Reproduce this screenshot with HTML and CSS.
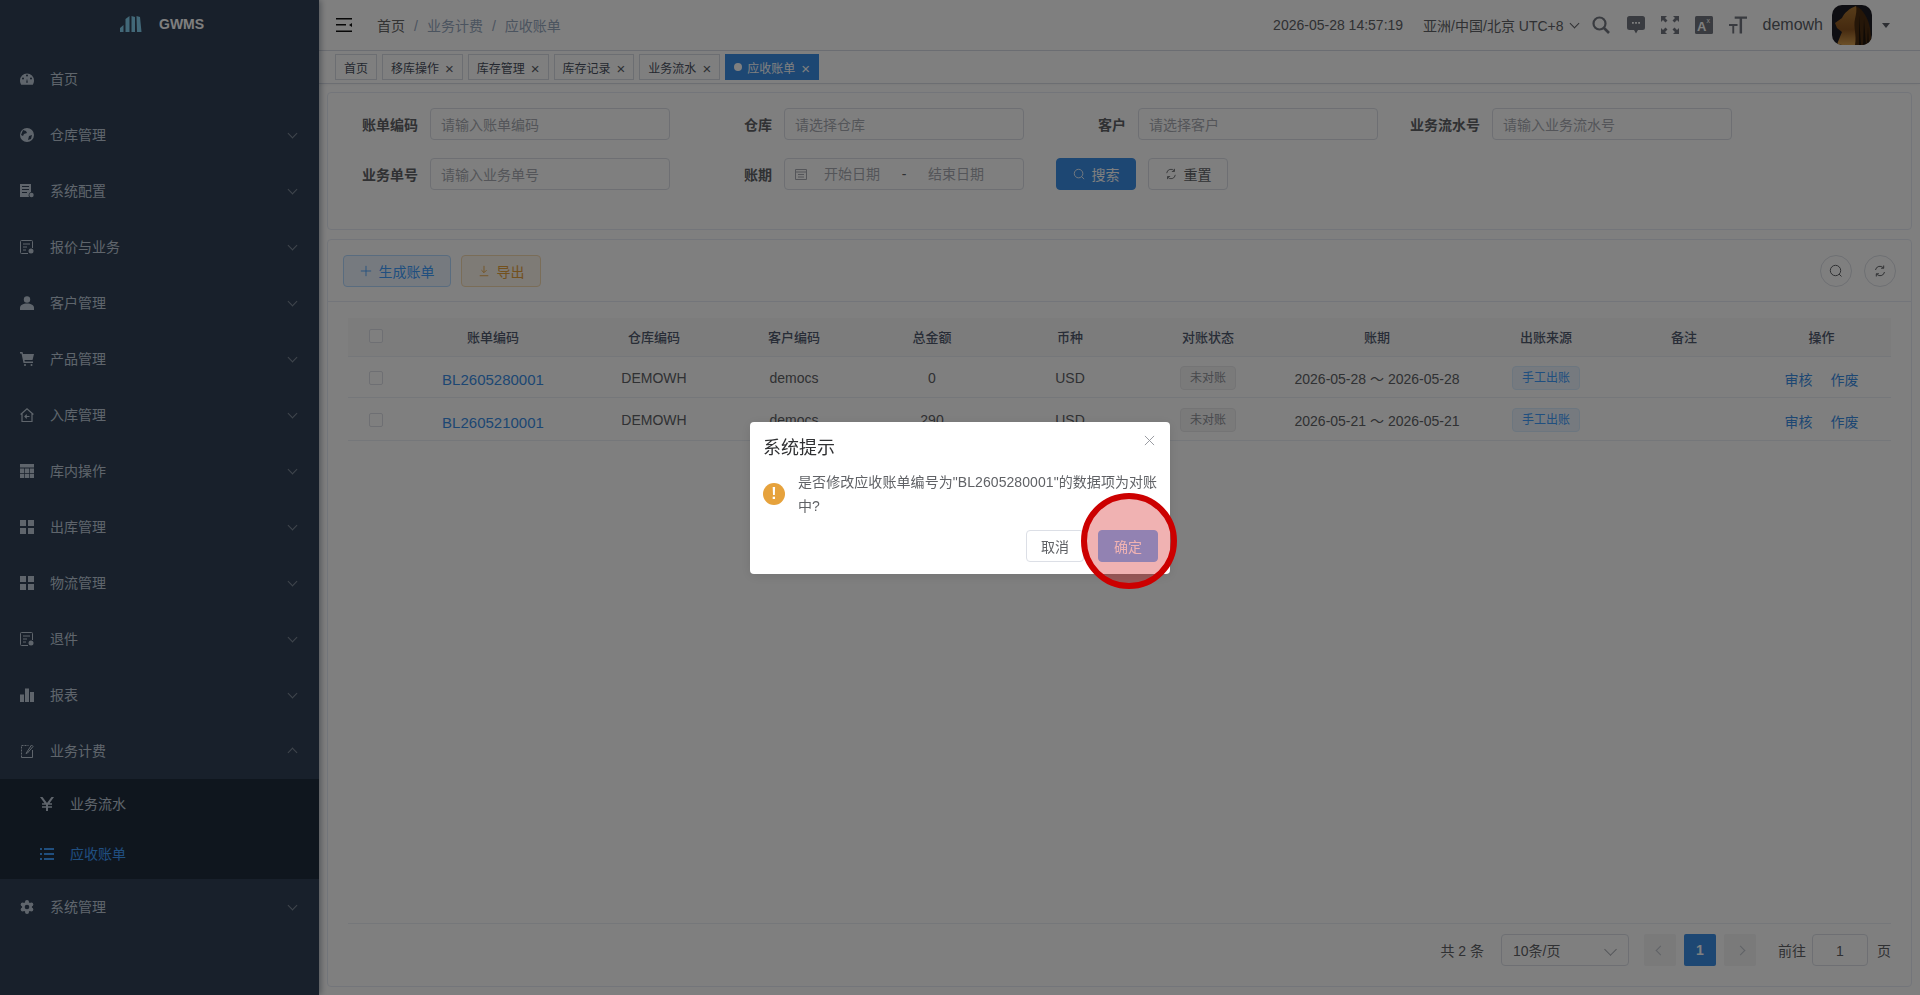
FILE: index.html
```html
<!DOCTYPE html>
<html lang="zh-CN">
<head>
    <meta charset="UTF-8">
    <title>GWMS</title>
    <link rel="stylesheet" href="styles.css">
</head>
<body>
    <div class="app">
        <aside class="sidebar">
            <div class="logo">
                <svg class="logo-icon" viewBox="0 0 22 16"><path fill="#84d0f0" d="M0 16V12l3.500-3V16zM5.500 16V3l4-3V16zM11.500 16V0L15 1V16zM17 16 16.500 0 20 1l1.500 15z"/></svg>
                <span class="logo-text">GWMS</span>
            </div>
            <a class="menu-item"><svg class="menu-icon" viewBox="0 0 14 14"><path d="M7 1.500a7 7 0 0 0-7 7c0 1.700.5 3.200 1.200 4.200h11.600c.7-1 1.200-2.500 1.200-4.200a7 7 0 0 0-7-7zM3 5.500a1 1 0 1 1 0 2 1 1 0 0 1 0-2zM6 3.500a1 1 0 1 1 2 0 1 1 0 0 1-2 0zM7.800 10.500a1.200 1.200 0 0 1-1.600 0L7 6.500zM11 7.500a1 1 0 1 1 0-2 1 1 0 0 1 0 2z" fill-rule="evenodd"/></svg><span>首页</span></a>
            <a class="menu-item"><svg class="menu-icon" viewBox="0 0 14 14"><path d="M7 0a7 7 0 1 0 0 14A7 7 0 0 0 7 0zM3 2l3 1 1 2-3 1-1 2-2-1zM9 8l3-1-1 4-3 1z" fill-rule="evenodd"/></svg><span>仓库管理</span><i class="chevron"></i></a>
            <a class="menu-item"><svg class="menu-icon" viewBox="0 0 14 14"><path d="M0 0h11v8a3.500 3.500 0 0 0-2 5H0zM2 2v1h7V2zM2 5v1h7V5zM2 8v1h5V8z" fill-rule="evenodd"/><circle cx="11.500" cy="11" r="2.200"/></svg><span>系统配置</span><i class="chevron"></i></a>
            <a class="menu-item"><svg class="menu-icon line" viewBox="0 0 14 14"><path stroke="#bfcbd9" d="M8 13.500H1.500a1 1 0 0 1-1-1V1.500a1 1 0 0 1 1-1h10a1 1 0 0 1 1 1V8M3 4h7M3 7h4M3 10h3"/><circle cx="11" cy="11" r="2.500" fill="#bfcbd9"/></svg><span>报价与业务</span><i class="chevron"></i></a>
            <a class="menu-item"><svg class="menu-icon" viewBox="0 0 14 14"><circle cx="7" cy="3.500" r="3.200"/><path d="M0 14v-2c0-3 3-4.500 7-4.500s7 1.500 7 4.500v2z"/></svg><span>客户管理</span><i class="chevron"></i></a>
            <a class="menu-item"><svg class="menu-icon" viewBox="0 0 14 14"><path d="M0 0h2.500l.5 2h11l-1.500 6H4.500l.3 1.500H13V11H3.500L1.500 1.500H0z"/><circle cx="5" cy="13" r="1"/><circle cx="11.500" cy="13" r="1"/></svg><span>产品管理</span><i class="chevron"></i></a>
            <a class="menu-item"><svg class="menu-icon line" viewBox="0 0 14 14"><path stroke="#bfcbd9" stroke-width="1.200" d="M.6 6.500 7 .8l6.400 5.700M2 5.500v8h10v-8"/><path stroke="#bfcbd9" stroke-width="1.200" d="M9.500 8.500H5M6.800 6.700 5 8.500l1.800 1.800"/></svg><span>入库管理</span><i class="chevron"></i></a>
            <a class="menu-item"><svg class="menu-icon" viewBox="0 0 14 14"><path d="M0 0h14v3.500H0zM0 4.500h4.300V9H0zM5 4.500h4V9H5zM9.700 4.500H14V9H9.700zM0 9.700h4.300V14H0zM5 9.700h4V14H5zM9.700 9.700H14V14H9.700z"/></svg><span>库内操作</span><i class="chevron"></i></a>
            <a class="menu-item"><svg class="menu-icon" viewBox="0 0 14 14"><path d="M0 0h6v6H0zM8 0h6v6H8zM0 8h6v6H0zM8 8h6v6H8z"/></svg><span>出库管理</span><i class="chevron"></i></a>
            <a class="menu-item"><svg class="menu-icon" viewBox="0 0 14 14"><path d="M0 0h6v6H0zM8 0h6v6H8zM0 8h6v6H0zM8 8h6v6H8z"/></svg><span>物流管理</span><i class="chevron"></i></a>
            <a class="menu-item"><svg class="menu-icon line" viewBox="0 0 14 14"><path stroke="#bfcbd9" d="M8 13.500H1.500a1 1 0 0 1-1-1V1.500a1 1 0 0 1 1-1h10a1 1 0 0 1 1 1V8M3 4h7M3 7h4M3 10h3"/><circle cx="11" cy="11" r="2.500" fill="#bfcbd9"/></svg><span>退件</span><i class="chevron"></i></a>
            <a class="menu-item"><svg class="menu-icon" viewBox="0 0 14 14"><path d="M0 6.500h4V14H0zM5 .5h4V14H5zM10 4h4v10h-4z"/></svg><span>报表</span><i class="chevron"></i></a>
            <a class="menu-item"><svg class="menu-icon line" viewBox="0 0 14 14"><path stroke="#bfcbd9" stroke-dasharray="2 1" d="M1.500 13.500v-12h7"/><path stroke="#bfcbd9" d="M1.500 13.500h11V6M6 9.500 11.500 1 13 2.500 7.500 9z"/></svg><span>业务计费</span><i class="chevron up"></i></a>
            <div class="submenu">
                <a class="menu-item sub"><svg class="menu-icon" viewBox="0 0 14 14"><path d="M0 0h2.500L7 6l4.500-6H14L9.500 6.300H12v1.500H8v1.400h4v1.500H8V14H6v-3.300H2V9.200h4V7.800H2V6.300h2.500z"/></svg><span>业务流水</span></a>
                <a class="menu-item sub active"><svg class="menu-icon" viewBox="0 0 14 14"><path d="M0 1h2v2H0zM4 1h10v2H4zM0 6h2v2H0zM4 6h10v2H4zM0 11h2v2H0zM4 11h10v2H4z"/></svg><span>应收账单</span></a>
            </div>
            <a class="menu-item"><svg class="menu-icon" viewBox="0 0 14 14"><circle cx="7" cy="7" r="5"/><circle cx="7" cy="2" r="2"/><circle cx="7" cy="12" r="2"/><circle cx="2.700" cy="4.500" r="2"/><circle cx="11.300" cy="4.500" r="2"/><circle cx="2.700" cy="9.500" r="2"/><circle cx="11.300" cy="9.500" r="2"/><circle cx="7" cy="7" r="2.300" fill="#304156"/></svg><span>系统管理</span><i class="chevron"></i></a>
        </aside>

        <main class="main">
            <header class="navbar">
                <svg class="hamburger" viewBox="0 0 16 14"><path fill="#111" d="M0 0h16v1.600H0zM0 6h10v1.600H0zM0 12.400h16V14H0zM16 5v4l-3-2z"/></svg>
                <nav class="breadcrumb">
                    <span class="crumb-first">首页</span><i>/</i><span>业务计费</span><i>/</i><span>应收账单</span>
                </nav>
                <div class="navbar-right">
                    <span class="clock">2026-05-28 14:57:19</span>
                    <span class="timezone">亚洲/中国/北京 UTC+8<i class="chevron dark"></i></span>
                    <svg class="tool tool-search" viewBox="0 0 18 18" fill="none"><circle cx="7.500" cy="7.500" r="6" stroke="#737780" stroke-width="2.200"/><path stroke="#737780" stroke-width="2.600" d="m12 12 5 5"/></svg>
                    <svg class="tool" viewBox="0 0 18 18"><path fill="#737780" d="M2.500 0h13A2.500 2.500 0 0 1 18 2.500v9a2.500 2.500 0 0 1-2.500 2.500H11l-2 3.500L7 14H2.500A2.500 2.500 0 0 1 0 11.500v-9A2.500 2.500 0 0 1 2.500 0z"/><path fill="#fff" d="M5 6h1.800v1.800H5zM8.100 6h1.800v1.800H8.100zM11.200 6H13v1.800h-1.800z"/></svg>
                    <svg class="tool" viewBox="0 0 18 18"><path fill="#737780" d="M0 0h6L4 2l2.500 2.500-2 2L2 4 0 6zM18 0v6l-2-2-2.500 2.500-2-2L14 2l-2-2zM0 18v-6l2 2 2.500-2.500 2 2L4 16l2 2zM18 18h-6l2-2-2.500-2.500 2-2L16 14l2-2z"/></svg>
                    <svg class="tool" viewBox="0 0 18 18"><rect width="18" height="18" rx="1.500" fill="#737780"/><text x="2" y="15" class="tool-a">A</text><text x="11.500" y="7" class="tool-x">x</text></svg>
                    <svg class="tool" viewBox="0 0 19 18"><path fill="#737780" d="M6 0h13v2.500h-5.200V18h-2.600V2.500H6zM0 8h9v2H5.500v8h-2v-8H0z"/></svg>
                    <span class="username">demowh</span>
                    <svg class="avatar" viewBox="0 0 40 40">
                        <defs>
                            <clipPath id="avatarClip"><rect width="40" height="40" rx="10"/></clipPath>
                            <linearGradient id="fur" x1="0" y1="0" x2="0" y2="1">
                                <stop offset="0" stop-color="#b07a34"/>
                                <stop offset="0.6" stop-color="#8c5520"/>
                                <stop offset="1" stop-color="#d8a050"/>
                            </linearGradient>
                        </defs>
                        <g clip-path="url(#avatarClip)">
                            <rect width="40" height="40" fill="#1c1c24"/>
                            <path d="M24 1c7 3 12 12 14 22l2 17H8z" fill="#4a2c10"/>
                            <path d="M32 14l2 26h-3zM27 10l2 30h-2zM36 22l1 18h-2z" fill="#1f150c"/>
                            <path d="M24 1c-6 2-12 7-14 12l-7 5 2 5 5 4c-2 5-4 9-5 13h18c2-10-2-18 0-26 1-5 2-9 1-13z" fill="url(#fur)"/>
                        </g>
                    </svg>
                    <i class="caret"></i>
                </div>
            </header>

            <div class="tags">
                <span class="tag">首页</span>
                <span class="tag">移库操作<i>×</i></span>
                <span class="tag">库存管理<i>×</i></span>
                <span class="tag">库存记录<i>×</i></span>
                <span class="tag">业务流水<i>×</i></span>
                <span class="tag current"><b></b>应收账单<i>×</i></span>
            </div>

            <div class="content">
                <section class="card search-card">
                    <div class="form-row">
                        <div class="form-item"><label>账单编码</label><div class="input">请输入账单编码</div></div>
                        <div class="form-item"><label>仓库</label><div class="input">请选择仓库</div></div>
                        <div class="form-item"><label>客户</label><div class="input">请选择客户</div></div>
                        <div class="form-item"><label>业务流水号</label><div class="input">请输入业务流水号</div></div>
                    </div>
                    <div class="form-row">
                        <div class="form-item"><label>业务单号</label><div class="input">请输入业务单号</div></div>
                        <div class="form-item">
                            <label>账期</label>
                            <div class="input date-range">
                                <svg class="cal" viewBox="0 0 12 12" fill="none"><path stroke="#a8abb2" d="M.5 1.500h11v10H.5zM.5 4h11M3 6.500h6M3 9h6"/></svg>
                                <span class="date-part">开始日期</span><span class="date-sep">-</span><span class="date-part">结束日期</span>
                            </div>
                        </div>
                        <div class="form-actions">
                            <button class="btn primary"><svg viewBox="0 0 14 14" fill="none"><circle cx="6.500" cy="6.500" r="5" stroke="#fff"/><path stroke="#fff" d="m10 10 3 3"/></svg>搜索</button>
                            <button class="btn plain"><svg viewBox="0 0 14 14" fill="none"><path stroke="#606266" d="M2 6a5 5 0 0 1 9-2.500M12 8a5 5 0 0 1-9 2.500M11 1v3H8M3 13v-3h3"/></svg>重置</button>
                        </div>
                    </div>
                </section>

                <section class="card table-card">
                    <div class="toolbar">
                        <button class="btn tint-blue"><svg viewBox="0 0 14 14" fill="none"><path stroke="#409eff" d="M7 1v12M1 7h12"/></svg>生成账单</button>
                        <button class="btn tint-orange"><svg viewBox="0 0 14 14" fill="none"><path stroke="#e6a23c" d="M7 1v7.500M4 6l3 3 3-3M2 12.500h10"/></svg>导出</button>
                        <div class="toolbar-right">
                            <button class="circle"><svg viewBox="0 0 14 14" fill="none"><circle cx="6.500" cy="6.500" r="5.200" stroke="#606266"/><path stroke="#606266" d="m10 10 2.500 2.500"/></svg></button>
                            <button class="circle"><svg viewBox="0 0 14 14" fill="none"><path stroke="#606266" d="M2.500 6a4.500 4.500 0 0 1 8-2M11.500 8a4.500 4.500 0 0 1-8 2M10.700 1.500V4.200H8M3.300 12.500V9.800H6"/></svg></button>
                        </div>
                    </div>

                    <div class="table">
                        <div class="table-row table-head">
                            <div><i class="check"></i></div><div>账单编码</div><div>仓库编码</div><div>客户编码</div><div>总金额</div><div>币种</div><div>对账状态</div><div>账期</div><div>出账来源</div><div>备注</div><div>操作</div>
                        </div>
                        <div class="table-row row-first">
                            <div><i class="check"></i></div>
                            <div><a class="bill-link">BL2605280001</a></div>
                            <div>DEMOWH</div><div>democs</div><div>0</div><div>USD</div>
                            <div><span class="pill grey">未对账</span></div>
                            <div>2026-05-28 ～ 2026-05-28</div>
                            <div><span class="pill blue">手工出账</span></div>
                            <div></div>
                            <div class="ops"><a>审核</a><a>作废</a></div>
                        </div>
                        <div class="table-row row-second">
                            <div><i class="check"></i></div>
                            <div><a class="bill-link">BL2605210001</a></div>
                            <div>DEMOWH</div><div>democs</div><div>290</div><div>USD</div>
                            <div><span class="pill grey">未对账</span></div>
                            <div>2026-05-21 ～ 2026-05-21</div>
                            <div><span class="pill blue">手工出账</span></div>
                            <div></div>
                            <div class="ops"><a>审核</a><a>作废</a></div>
                        </div>
                    </div>

                    <div class="pagination">
                        <span class="total">共 2 条</span>
                        <div class="page-size">10条/页<i class="chevron grey"></i></div>
                        <span class="page-btn"><i class="arrow left"></i></span>
                        <span class="page-btn current">1</span>
                        <span class="page-btn"><i class="arrow right"></i></span>
                        <span class="goto">前往</span>
                        <div class="page-input">1</div>
                        <span class="goto-end">页</span>
                    </div>
                </section>
            </div>
        </main>
    </div>

    <div class="mask"></div>

    <div class="dialog">
        <div class="dialog-title">系统提示</div>
        <svg class="dialog-close" viewBox="0 0 12 12" fill="none"><path stroke="#909399" d="m1 1 10 10M11 1 1 11"/></svg>
        <div class="dialog-body">
            <span class="warn">!</span>
            <p>是否修改应收账单编号为"BL2605280001"的数据项为对账中?</p>
        </div>
        <div class="dialog-footer">
            <button class="btn plain">取消</button>
            <button class="btn confirm">确定</button>
        </div>
    </div>

    <div class="click-mark"></div>
</body>
</html>
```

FILE: styles.css
```css
* {
    box-sizing: border-box;
}

body {
    margin: 0;
    height: 995px;
    overflow: hidden;
    font-family: "Liberation Sans", "Noto Sans CJK SC", sans-serif;
    font-size: 14px;
    color: #606266;
    background: #fff;
}

i {
    font-style: normal;
}

button {
    font-family: inherit;
}

.app {
    display: flex;
    height: 995px;
}

/* sidebar */
.sidebar {
    width: 319px;
    flex-shrink: 0;
    background: #304156;
    box-shadow: 2px 0 6px rgba(0, 21, 41, 0.35);
    z-index: 1;
}

.logo {
    height: 51px;
    display: flex;
    align-items: center;
    padding-left: 120px;
    padding-bottom: 4px;
}

.logo-icon {
    width: 22px;
    height: 16px;
    margin-right: 17px;
}

.logo-text {
    font-size: 14px;
    font-weight: 700;
    color: #fff;
}

.menu-item {
    height: 56px;
    display: flex;
    align-items: center;
    padding-left: 20px;
    color: #bfcbd9;
    position: relative;
}

.menu-item span {
    position: relative;
    top: -1px;
}

.menu-icon {
    width: 14px;
    height: 14px;
    fill: #bfcbd9;
    margin-right: 16px;
    flex-shrink: 0;
}

.menu-icon.line {
    fill: none;
}

.submenu {
    background: #1f2d3d;
}

.menu-item.sub {
    height: 50px;
    padding-left: 40px;
}

.menu-item.active {
    color: #409eff;
}

.menu-item.active .menu-icon {
    fill: #409eff;
}

.chevron {
    position: absolute;
    right: 23px;
    top: 50%;
    width: 7px;
    height: 7px;
    margin-top: -5px;
    border-right: 1px solid #7f8b99;
    border-bottom: 1px solid #7f8b99;
    transform: rotate(45deg);
}

.chevron.up {
    margin-top: -2px;
    transform: rotate(-135deg);
}

/* navbar */
.main {
    flex: 1;
    min-width: 0;
}

.navbar {
    height: 51px;
    display: flex;
    align-items: center;
    padding: 0 30px 0 17px;
    border-bottom: 1px solid #d8dce5;
}

.hamburger {
    width: 16px;
    height: 14px;
    margin-right: 25px;
}

.breadcrumb {
    color: #97a8be;
}

.breadcrumb i {
    margin: 0 9px;
    color: #97a8be;
}

.crumb-first {
    color: #666;
}

.navbar-right {
    margin-left: auto;
    display: flex;
    align-items: center;
    height: 50px;
}

.clock {
    color: #606266;
    margin-right: 20px;
}

.timezone {
    position: relative;
    color: #606266;
    padding-right: 17px;
    margin-right: 11px;
}

.chevron.dark {
    right: 3px;
    border-color: #606266;
}

.tool {
    width: 18px;
    height: 18px;
    margin-right: 16px;
}

.tool-search {
    margin-right: 17px;
}

.tool-a {
    font-size: 13px;
    font-weight: 700;
    fill: #fff;
}

.tool-x {
    font-size: 7px;
    fill: #fff;
}

.username {
    font-size: 16px;
    color: #5a5e66;
    margin-right: 9px;
}

.avatar {
    width: 40px;
    height: 40px;
    margin-right: 10px;
}

.caret {
    width: 0;
    height: 0;
    border: 4px solid transparent;
    border-top: 5px solid #5a5e66;
    margin-top: 4px;
}

/* tags */
.tags {
    height: 33px;
    display: flex;
    align-items: center;
    gap: 5px;
    padding-left: 16px;
    border-bottom: 1px solid #d8dce5;
    box-shadow: 0 1px 3px rgba(0, 0, 0, 0.04);
}

.tag {
    height: 26px;
    display: flex;
    align-items: center;
    padding: 0 8px;
    border: 1px solid #d8dce5;
    font-size: 12px;
    color: #495060;
}

.tag i {
    font-size: 15px;
    margin-left: 6px;
    margin-top: 2px;
    color: #5a5e66;
}

.tag.current {
    background: #3a8ee6;
    border-color: #3a8ee6;
    color: #fff;
}

.tag.current i {
    color: #fff;
}

.tag.current b {
    width: 8px;
    height: 8px;
    border-radius: 50%;
    background: #fff;
    margin-right: 5px;
}

/* content */
.content {
    padding: 8px 8px 0 8px;
}

.card {
    border: 1px solid #e6ebf5;
    border-radius: 4px;
    background: #fff;
}

.search-card {
    height: 138px;
    padding-top: 15px;
    margin-bottom: 9px;
}

.form-row {
    display: flex;
    margin-bottom: 18px;
}

.form-item {
    width: 354px;
    flex-shrink: 0;
    display: flex;
    align-items: center;
}

.form-item label {
    width: 90px;
    margin-right: 12px;
    text-align: right;
    font-weight: 700;
    color: #606266;
}

.input {
    width: 240px;
    height: 32px;
    border: 1px solid #dcdfe6;
    border-radius: 4px;
    padding: 0 10px;
    line-height: 32px;
    color: #a8abb2;
}

.date-range {
    display: flex;
    align-items: center;
    padding: 0;
}

.cal {
    width: 12px;
    height: 12px;
    margin: 0 17px 0 10px;
}

.date-part {
    width: 56px;
}

.date-sep {
    width: 48px;
    text-align: center;
    color: #606266;
}

.form-actions {
    display: flex;
    gap: 12px;
    margin-left: 20px;
}

.btn {
    height: 32px;
    display: inline-flex;
    align-items: center;
    justify-content: center;
    border: 1px solid #dcdfe6;
    border-radius: 4px;
    background: #fff;
    font-size: 14px;
    color: #606266;
    padding: 0;
}

.btn svg {
    width: 12px;
    height: 12px;
    margin-right: 7px;
}

.btn.primary {
    width: 80px;
    background: #3a8ee6;
    border-color: #3a8ee6;
    color: #fff;
}

.btn.plain {
    width: 80px;
}

.btn.tint-blue {
    width: 108px;
    background: #ecf5ff;
    border-color: #b3d8ff;
    color: #409eff;
}

.btn.tint-orange {
    width: 80px;
    background: #fdf6ec;
    border-color: #f5dab1;
    color: #e6a23c;
}

/* table card */
.table-card {
    height: 748px;
    display: flex;
    flex-direction: column;
}

.toolbar {
    height: 62px;
    flex-shrink: 0;
    display: flex;
    align-items: center;
    gap: 10px;
    padding: 0 15px;
    border-bottom: 1px solid #e6ebf5;
}

.toolbar-right {
    margin-left: auto;
    display: flex;
    gap: 12px;
}

.circle {
    width: 32px;
    height: 32px;
    padding: 0;
    border: 1px solid #dcdfe6;
    border-radius: 50%;
    background: #fff;
    display: flex;
    align-items: center;
    justify-content: center;
}

.circle svg {
    width: 14px;
    height: 14px;
}

.table {
    margin: 16px 20px 0 20px;
}

.table-row {
    display: grid;
    grid-template-columns: 56px 178px 144px 136px 140px 136px 140px 198px 140px 136px 139px;
    align-items: center;
    text-align: center;
    border-bottom: 1px solid #ebeef5;
}

.table-head {
    height: 39px;
    padding-bottom: 2px;
    background: #f8f8f9;
    font-size: 13px;
    font-weight: 500;
    color: #515a6e;
}

.row-first {
    height: 41px;
    padding-top: 1px;
}

.row-second {
    height: 43px;
    padding-top: 2px;
}

.check {
    display: block;
    width: 14px;
    height: 14px;
    margin: 0 auto;
    border: 1px solid #dcdfe6;
    border-radius: 2px;
    background: #fff;
}

.bill-link {
    font-size: 15px;
    color: #3a8ee6;
    position: relative;
    top: 2px;
}

.pill {
    display: inline-block;
    height: 24px;
    line-height: 22px;
    padding: 0 9px;
    border: 1px solid;
    border-radius: 4px;
    font-size: 12px;
}

.pill.grey {
    background: #f4f4f5;
    border-color: #e9e9eb;
    color: #909399;
}

.pill.blue {
    background: #ecf5ff;
    border-color: #d9ecff;
    color: #409eff;
}

.ops {
    display: flex;
    justify-content: center;
    gap: 18px;
    position: relative;
    top: 1px;
    color: #3a8ee6;
}

/* pagination */
.pagination {
    margin: auto 20px 0 20px;
    height: 63px;
    border-top: 1px solid #ebeef5;
    display: flex;
    align-items: flex-start;
    padding-top: 10px;
    line-height: 34px;
}

.total {
    margin-left: auto;
    margin-right: 17px;
}

.page-size {
    position: relative;
    width: 128px;
    height: 32px;
    border: 1px solid #dcdfe6;
    border-radius: 4px;
    padding-left: 11px;
    line-height: 32px;
    margin-right: 15px;
}

.chevron.grey {
    right: 13px;
    width: 9px;
    height: 9px;
    border-color: #a8abb2;
}

.page-btn {
    width: 32px;
    height: 32px;
    margin-right: 8px;
    border-radius: 2px;
    background: #f4f4f5;
    display: flex;
    align-items: center;
    justify-content: center;
}

.page-btn.current {
    background: #3a8ee6;
    color: #fff;
    font-weight: 700;
}

.arrow {
    width: 7px;
    height: 7px;
    border-left: 1px solid #c0c4cc;
    border-bottom: 1px solid #c0c4cc;
    transform: rotate(45deg);
}

.arrow.right {
    transform: rotate(-135deg);
}

.goto {
    margin-left: 14px;
    margin-right: 6px;
}

.page-input {
    width: 56px;
    height: 32px;
    border: 1px solid #dcdfe6;
    border-radius: 4px;
    text-align: center;
    line-height: 32px;
    margin-right: 9px;
}

/* message box */
.mask {
    position: fixed;
    inset: 0;
    background: rgba(0, 0, 0, 0.5);
    z-index: 10;
}

.dialog {
    position: fixed;
    left: 750px;
    top: 422px;
    width: 420px;
    height: 152px;
    background: #fff;
    border-radius: 4px;
    box-shadow: 0 2px 12px rgba(0, 0, 0, 0.1);
    z-index: 11;
}

.dialog-title {
    padding: 15px 0 0 13px;
    font-size: 18px;
    line-height: 22px;
    color: #303133;
}

.dialog-close {
    position: absolute;
    right: 15px;
    top: 13px;
    width: 11px;
    height: 11px;
}

.dialog-body {
    display: flex;
    align-items: center;
    padding: 11px 12px 0 13px;
}

.dialog-body p {
    margin: 0;
    line-height: 24px;
    letter-spacing: 0.07px;
    color: #606266;
}

.warn {
    width: 22px;
    height: 22px;
    flex-shrink: 0;
    margin-right: 13px;
    border-radius: 50%;
    background: #e6a23c;
    color: #fff;
    font-size: 16px;
    font-weight: 700;
    line-height: 22px;
    text-align: center;
}

.dialog-footer {
    display: flex;
    justify-content: flex-end;
    gap: 14px;
    padding: 0 12px 0 0;
    margin-top: 12px;
}

.dialog-footer .btn.plain {
    width: 58px;
}

.btn.confirm {
    width: 60px;
    background: #79bbff;
    border-color: #79bbff;
    color: #fff;
}

.click-mark {
    position: fixed;
    left: 1081px;
    top: 493px;
    width: 96px;
    height: 96px;
    border: 6px solid #c00;
    border-radius: 50%;
    background: rgba(204, 0, 0, 0.3);
    z-index: 12;
}
```
